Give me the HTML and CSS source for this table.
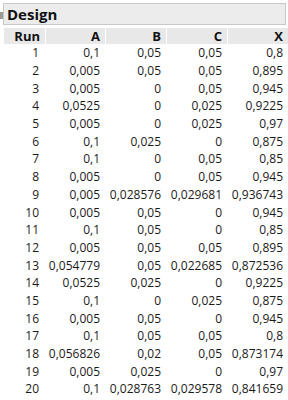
FILE: index.html
```html
<!DOCTYPE html>
<html>
<head>
<meta charset="utf-8">
<link rel="stylesheet" href="styles.css">
</head>
<body>
<div class="panel">
  <div class="title-row">
    <span class="toggle"></span>
    <div class="title">Design</div>
  </div>
  <table class="grid">
    <colgroup><col class="c-run"><col class="c-a"><col class="c-b"><col class="c-c"><col class="c-x"></colgroup>
    <thead>
      <tr><th>Run</th><th>A</th><th>B</th><th>C</th><th>X</th></tr>
    </thead>
    <tbody>
      <tr><td>1</td><td>0,1</td><td>0,05</td><td>0,05</td><td>0,8</td></tr>
      <tr><td>2</td><td>0,005</td><td>0,05</td><td>0,05</td><td>0,895</td></tr>
      <tr><td>3</td><td>0,005</td><td>0</td><td>0,05</td><td>0,945</td></tr>
      <tr><td>4</td><td>0,0525</td><td>0</td><td>0,025</td><td>0,9225</td></tr>
      <tr><td>5</td><td>0,005</td><td>0</td><td>0,025</td><td>0,97</td></tr>
      <tr><td>6</td><td>0,1</td><td>0,025</td><td>0</td><td>0,875</td></tr>
      <tr><td>7</td><td>0,1</td><td>0</td><td>0,05</td><td>0,85</td></tr>
      <tr><td>8</td><td>0,005</td><td>0</td><td>0,05</td><td>0,945</td></tr>
      <tr><td>9</td><td>0,005</td><td>0,028576</td><td>0,029681</td><td>0,936743</td></tr>
      <tr><td>10</td><td>0,005</td><td>0,05</td><td>0</td><td>0,945</td></tr>
      <tr><td>11</td><td>0,1</td><td>0,05</td><td>0</td><td>0,85</td></tr>
      <tr><td>12</td><td>0,005</td><td>0,05</td><td>0,05</td><td>0,895</td></tr>
      <tr><td>13</td><td>0,054779</td><td>0,05</td><td>0,022685</td><td>0,872536</td></tr>
      <tr><td>14</td><td>0,0525</td><td>0,025</td><td>0</td><td>0,9225</td></tr>
      <tr><td>15</td><td>0,1</td><td>0</td><td>0,025</td><td>0,875</td></tr>
      <tr><td>16</td><td>0,005</td><td>0,05</td><td>0</td><td>0,945</td></tr>
      <tr><td>17</td><td>0,1</td><td>0,05</td><td>0,05</td><td>0,8</td></tr>
      <tr><td>18</td><td>0,056826</td><td>0,02</td><td>0,05</td><td>0,873174</td></tr>
      <tr><td>19</td><td>0,005</td><td>0,025</td><td>0</td><td>0,97</td></tr>
      <tr><td>20</td><td>0,1</td><td>0,028763</td><td>0,029578</td><td>0,841659</td></tr>
    </tbody>
  </table>
</div>
</body>
</html>
```
FILE: styles.css
```css
html, body {
  margin: 0;
  padding: 0;
  background: #ffffff;
}
body {
  font-family: "Open Sans", "Noto Sans", sans-serif;
  color: #1a1a1a;
  width: 288px;
  height: 400px;
  overflow: hidden;
}
.panel {
  padding-top: 3px;
}
.title-row {
  display: flex;
  align-items: flex-start;
  position: relative;
  padding-left: 3px;
  padding-right: 2px;
}
.toggle {
  position: absolute;
  left: 0;
  top: 9px;
  width: 3px;
  height: 7px;
  background: #9a9a9a;
}
.title {
  flex: 1;
  height: 20px;
  border: 1px solid #c8c8c8;
  background: #ececec;
  font-weight: 700;
  font-size: 15px;
  line-height: 20px;
  padding-left: 3px;
  color: #111;
}
.grid {
  margin-top: 3px;
  margin-left: 4px;
  border-collapse: separate;
  border-spacing: 0;
  table-layout: fixed;
  width: 284px;
  font-size: 12px;
}
.c-run { width: 41px; }
.c-a { width: 60px; }
.c-b { width: 61px; }
.c-c { width: 61px; }
.c-x { width: 61px; }
th {
  background: #e8e8e8;
  border-left: 1px solid #ffffff;
  height: 16px;
  font-weight: 700;
  font-size: 13px;
  text-align: right;
  padding: 0 5px 0 0;
  line-height: 16px;
  color: #111;
}
th:first-child {
  border-left: none;
}
td {
  text-align: right;
  padding: 0 5px 0 0;
  height: 17.7px;
  line-height: 17px;
  white-space: nowrap;
}
td:first-child {
  padding-right: 6px;
}
```
